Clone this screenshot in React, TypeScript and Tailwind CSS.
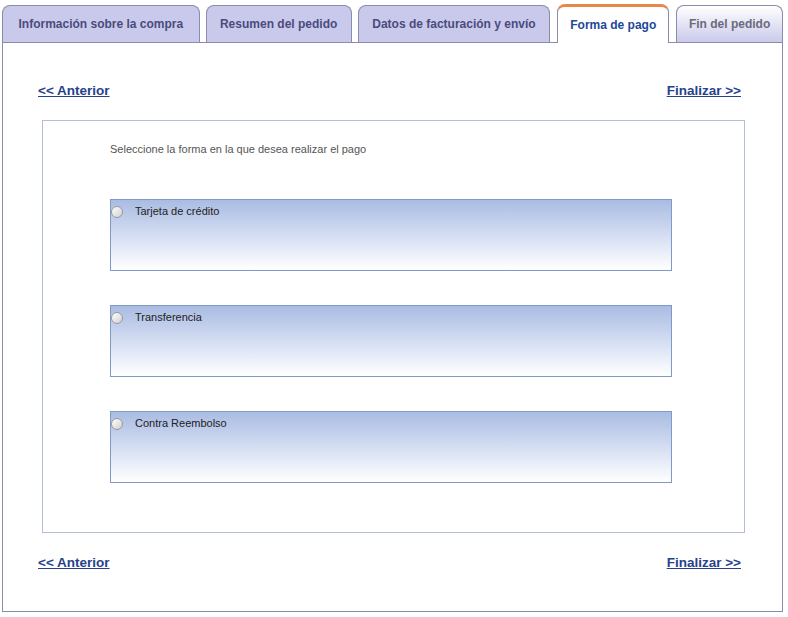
const tabs = [
  { label: "Información sobre la compra", w: "w-[198px]", ml: "ml-0" },
  { label: "Resumen del pedido", w: "w-[146px]", ml: "ml-[6px]" },
  { label: "Datos de facturación y envío", w: "w-[193px]", ml: "ml-[6px]" },
];

const opciones = ["Tarjeta de crédito", "Transferencia", "Contra Reembolso"];

const NavLinks = () => (
  <div className="flex justify-between pl-[35px] pr-[41px] text-[13.5px] font-bold leading-4 text-[#26428c]">
    <a href="#" className="underline">
      &lt;&lt; Anterior
    </a>
    <a href="#" className="underline">
      Finalizar &gt;&gt;
    </a>
  </div>
);

const Opcion = ({ label }: { label: string }) => (
  <label className="flex h-[72px] w-[562px] items-start border border-[#7f99c8] bg-gradient-to-b from-[#aabce3] to-white">
    <span className="mt-[6px] ml-0 h-[12px] w-[12px] rounded-full border border-[#9a9a9a] bg-gradient-to-br from-white to-[#d0d0d0]" />
    <span className="ml-[12px] mt-[5px] text-[11px] leading-[13px] text-[#222]">{label}</span>
  </label>
);

const App = () => {
  return (
    <div className="bg-white pt-[4px] pl-[2px] font-['Liberation_Sans',Arial,sans-serif]" style={{ width: 788, height: 617 }}>
      <div className="w-[781px]">
        <div className="relative z-10 flex items-end">
          {tabs.map((t) => (
            <div
              key={t.label}
              className={`${t.w} ${t.ml} flex h-[37px] items-center justify-center rounded-t-[8px] border border-b-0 border-[#8b8bab] bg-[#c9c9eb] text-[12px] font-bold text-[#4b4b7d]`}
            >
              {t.label}
            </div>
          ))}
          <div className="-mb-px ml-[7px] flex h-[39px] w-[112px] items-center justify-center rounded-t-[8px] border border-b-0 border-t-[3px] border-[#8b8bab] border-t-[#e8874c] bg-white pb-[1px] text-[12px] font-bold text-[#21489a]">
            Forma de pago
          </div>
          <div className="ml-[7px] flex h-[37px] w-[107px] items-center justify-center rounded-t-[8px] border border-b-0 border-[#8b8bab] bg-gradient-to-b from-white to-[#cacaea] text-[12px] font-bold text-[#6a6a7c]">
            Fin del pedido
          </div>
        </div>
        <div className="h-[570px] border border-[#8b8bab] pt-[40px]">
          <NavLinks />
          <div className="mt-[21px] ml-[39px] h-[413px] w-[703px] border border-[#b3bfd6] pt-[22px] pl-[67px]">
            <p className="text-[11px] leading-[13px] text-[#555]">
              Seleccione la forma en la que desea realizar el pago
            </p>
            <div className="mt-[43px] flex flex-col gap-[34px]">
              {opciones.map((o) => (
                <Opcion key={o} label={o} />
              ))}
            </div>
          </div>
          <div className="mt-[22px]">
            <NavLinks />
          </div>
        </div>
      </div>
    </div>
  );
};

export default App;
